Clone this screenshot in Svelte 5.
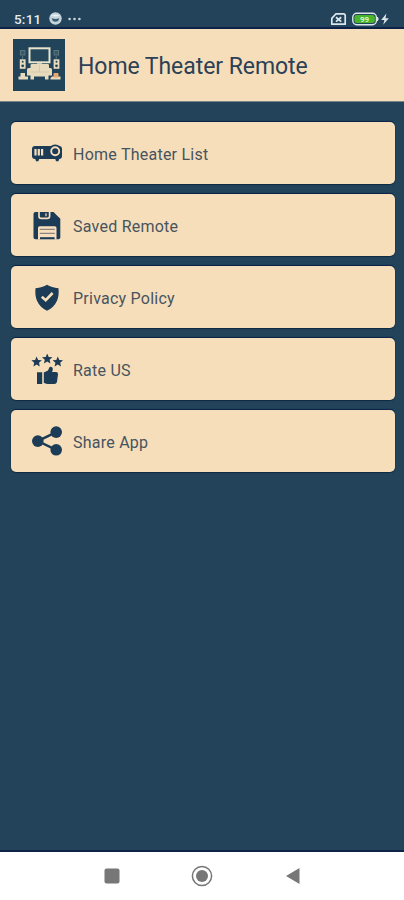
<script>
  const items = [
    { id: 'projector', label: 'Home Theater List' },
    { id: 'save', label: 'Saved Remote' },
    { id: 'shield', label: 'Privacy Policy' },
    { id: 'rate', label: 'Rate US' },
    { id: 'share', label: 'Share App' }
  ];
  const star = 'M0-5.2 1.5-1.8 5.2-1.5 2.4 1 3.2 4.7 0 2.8-3.2 4.7-2.4 1-5.2-1.5-1.5-1.8Z';
</script>

<div class="screen">
  <div class="status">
    <span class="time">5:11</span>
    <svg class="face" width="13" height="13" viewBox="0 0 13 13">
      <circle cx="6.5" cy="6.5" r="6.2" fill="#c5d3dc" />
      <path d="M2 3.8Q6.5 1.8 11 3.8Q6.5 5.2 2 3.8Z" fill="#eef4f7" />
      <path d="M2.8 6.2Q6.5 7.6 10.2 6.2Q9.8 9.8 6.5 9.8T2.8 6.2Z" fill="#3f5d70" />
    </svg>
    <svg class="dots" width="13" height="4" viewBox="0 0 13 4" fill="#c9d6dd">
      <circle cx="1.6" cy="2" r="1.3" /><circle cx="6.5" cy="2" r="1.3" /><circle cx="11.4" cy="2" r="1.3" />
    </svg>
    <svg class="power" width="60" height="14" viewBox="0 0 60 14">
      <path d="M1.8 12.2V6.4L6 1.8H13.4Q15.2 1.8 15.2 3.6V12.2Z" fill="#224359" stroke="#dce6ec" stroke-width="1.7" stroke-linejoin="round" />
      <path d="M6 5.2 11.2 9.6M11.2 5.2 6 9.6" stroke="#dce6ec" stroke-width="1.8" />
      <rect x="22.8" y="1.3" width="23.6" height="11.4" rx="4" fill="#224359" stroke="#dce6ec" stroke-width="1.4" />
      <rect x="24.4" y="2.9" width="20.4" height="8.2" rx="2.4" fill="#49b52c" />
      <path d="M47.4 5Q49 7 47.4 9Z" fill="#dce6ec" stroke="#dce6ec" />
      <text x="34.6" y="9.9" text-anchor="middle">99</text>
      <path d="M56.4 1.6 51.2 8H54.4L53.2 12.8 58.8 6.2H55.5Z" fill="#dce6ec" />
    </svg>
  </div>

  <header>
    <svg class="logo" width="52" height="52" viewBox="0 0 52 52">
      <rect width="52" height="52" fill="#21445a" />
      <rect x="16.5" y="9.3" width="20" height="14" fill="#25485c" stroke="#e9e4cd" stroke-width="2" />
      <path d="M24 24H29V26H24Z" fill="#c9c4ad" />
      <g fill="#3b5866" stroke="#5b7480" stroke-width="1">
        <rect x="7.4" y="11.5" width="4.5" height="4.5" /><rect x="41" y="11.5" width="4.5" height="4.5" />
        <path d="M9.6 17V20M43.2 17V20" />
      </g>
      <g fill="#e8dabc">
        <rect x="6.8" y="20.3" width="5.8" height="9.5" /><rect x="40.6" y="20.3" width="5.8" height="9.5" />
        <path d="M17.5 26Q17.5 25 19 25H34.5Q36 25 36 26V29H37.5Q39 29 39 30.5V36.5H35.5V40.5H32V37.5H21V40.5H17.5V36.5H14V30.5Q14 29 15.5 29H17.5Z" />
        <path d="M7.5 34H12V37.5H15V40.5H5.5V37.5H7.5Z" />
        <path d="M39 37.5H47.5V40.5H37.5V39Z" />
      </g>
      <g fill="#21445a"><circle cx="9.7" cy="22.8" r="1" /><circle cx="9.7" cy="26.8" r="1.4" /><circle cx="43.5" cy="22.8" r="1" /><circle cx="43.5" cy="26.8" r="1.4" /></g>
      <path d="M17 33H36M26.5 26V33" stroke="#d0c2a4" stroke-width=".7" />
      <rect x="40.5" y="34" width="5" height="4.5" rx="1" fill="#e9a66f" />
    </svg>
    <h1>Home Theater Remote</h1>
  </header>

  <main>
    {#each items as item}
      <button>
        <svg width="32" height="32" viewBox="0 0 32 32" fill="#1b3b56">
          {#if item.id === 'projector'}
            <rect x="1" y="7.9" width="30" height="13" rx="3" />
            <path d="M4 20H8.5L7.4 23.2H5ZM24 20H28.5L27.5 23.2H25Z" />
            <circle cx="24.2" cy="13" r="6.6" />
            <path d="M3.4 11H5.6V17.4H3.4ZM6.7 11H8.9V17.4H6.7ZM10 11H12.2V17.4H10Z" fill="#f7dfbc" />
            <circle cx="24.2" cy="13.2" r="4" fill="none" stroke="#f7dfbc" stroke-width="1.9" />
          {:else if item.id === 'save'}
            <path d="M4.5 2H22.5L29.3 8.8V27.2Q29.3 29.2 27.3 29.2H4.5Q2.5 29.2 2.5 27.2V4Q2.5 2 4.5 2Z" />
            <path d="M8 1.5V6.2Q8 8.4 10.2 8.4H16.4Q18.6 8.4 18.6 6.2V1.5" fill="none" stroke="#f7dfbc" stroke-width="1.7" />
            <path d="M14.2 3.2H15.8V6.2H14.2Z" fill="#c8b99f" />
            <path d="M7 29.5V18Q7 16.3 8.7 16.3H23.8Q25.5 16.3 25.5 18V29.5Z" fill="#f7dfbc" />
            <path d="M8.8 19.4H23.8M8.8 23.4H23.8" fill="none" stroke="#8a8580" stroke-width="1.4" />
            <path d="M9 27.2H23.6V29.2H9Z" />
          {:else if item.id === 'shield'}
            <path d="M16 2.8Q20.5 5.8 27.5 6.2Q28.2 13.8 26 18.8Q23 25.6 16 28.8Q9 25.6 6 18.8Q3.8 13.8 4.5 6.2Q11.5 5.8 16 2.8Z" />
            <path d="M10.8 14.8 14.7 18.2 21.6 11" fill="none" stroke="#f7dfbc" stroke-width="2.6" />
          {:else if item.id === 'rate'}
            <g>
              <path d={star} transform="translate(5.6 7.8)" />
              <path d={star} transform="translate(16.2 4.7)" />
              <path d={star} transform="translate(26.8 7.8)" />
            </g>
            <path d="M6 18.2H11.2V30H6ZM12.8 18.4L17 16.6 18.3 13.4Q19 12.3 20.6 12.9Q22.2 13.7 21.8 15.6L21.1 18H25Q27.2 18.1 27 20.2L26 27.8Q25.6 30 23.3 30H17Q15.2 30 12.8 28.8Z" />
          {:else}
            <path d="M25.2 6.1 6.8 15.1 25.2 23.8" fill="none" stroke="#1b3b56" stroke-width="2.4" />
            <circle cx="25.2" cy="6.1" r="5.8" /><circle cx="6.8" cy="15.1" r="5.8" /><circle cx="25.2" cy="23.8" r="5.8" />
          {/if}
        </svg>
        <span>{item.label}</span>
      </button>
    {/each}
  </main>

  <nav>
    <svg width="16" height="16" viewBox="0 0 16 16"><rect x=".5" y=".5" width="15" height="15" rx="2" fill="#777" /></svg>
    <svg width="22" height="22" viewBox="0 0 22 22"><circle cx="11" cy="11" r="9.6" fill="none" stroke="#777" stroke-width="1.5" /><circle cx="11" cy="11" r="6" fill="#777" /></svg>
    <svg width="16" height="18" viewBox="0 0 16 18"><path d="M1 9 14.5 1V17Z" fill="#777" /></svg>
  </nav>
</div>

<style>
  .screen {
    width: 404px;
    height: 900px;
    display: flex;
    flex-direction: column;
    overflow: hidden;
    background: #224359;
    font-family: Roboto, "Liberation Sans", sans-serif;
  }
  .status {
    box-sizing: border-box;
    height: 29px;
    padding: 10px 14px 0 14px;
    display: flex;
    align-items: center;
    border-bottom: 2px solid #0d2149;
  }
  .time {
    width: 27px;
    font-size: 13.5px;
    font-weight: 500;
    line-height: 18px;
    letter-spacing: .2px;
    color: #e4edf2;
  }
  .face { margin-left: 8px; }
  .dots { margin-left: 6px; }
  .power { margin-left: auto; }
  .power text { font-size: 8px; font-weight: 700; fill: #d8f3cd; }
  header {
    box-sizing: border-box;
    height: 73px;
    padding: 1px 13px 1px;
    display: flex;
    align-items: center;
    background: #f7deba;
    border-bottom: 1px solid #78858a;
  }
  h1 {
    margin: 3px 0 0 13px;
    font-size: 23px;
    font-weight: 400;
    line-height: 30px;
    letter-spacing: -.06px;
    white-space: nowrap;
    color: #2c4156;
  }
  main {
    flex: 1;
    padding: 20px 9.5px 0 11px;
    display: flex;
    flex-direction: column;
    gap: 10px;
  }
  button {
    height: 62px;
    flex: none;
    padding: 0 20px;
    display: flex;
    align-items: center;
    gap: 10px;
    border: 0;
    border-radius: 5px;
    background: #f7deba;
    box-shadow: 0 -1px 1px #0b2149, 0 1px 1px #102944;
    font: 400 16px Roboto, "Liberation Sans", sans-serif;
    letter-spacing: .24px;
    color: #46545f;
  }
  button svg { margin-top: 2px; }
  button span { padding-top: 2px; white-space: nowrap; }
  nav {
    box-sizing: border-box;
    height: 50px;
    display: flex;
    align-items: center;
    justify-content: space-between;
    padding: 0 103.5px 0 104px;
    border-top: 2px solid #0d2149;
    background: #fff;
  }
</style>
